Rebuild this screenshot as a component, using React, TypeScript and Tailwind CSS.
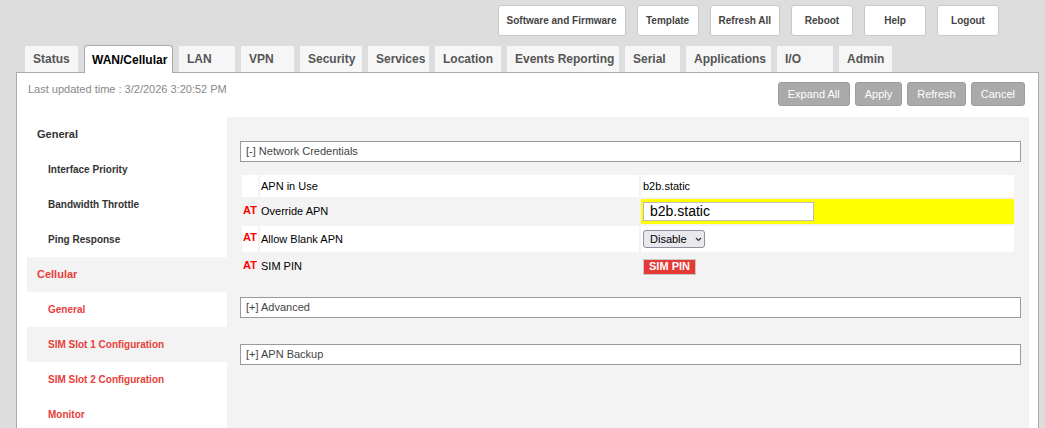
import React from 'react';

const topButtons = ['Software and Firmware', 'Template', 'Refresh All', 'Reboot', 'Help', 'Logout'];

const tabs: { label: string; w: string }[] = [
  { label: 'Status', w: 'w-[53px]' },
  { label: 'WAN/Cellular', w: 'w-[89px]' },
  { label: 'LAN', w: 'w-[56px]' },
  { label: 'VPN', w: 'w-[53px]' },
  { label: 'Security', w: 'w-[62px]' },
  { label: 'Services', w: 'w-[61px]' },
  { label: 'Location', w: 'w-[66px]' },
  { label: 'Events Reporting', w: 'w-[112px]' },
  { label: 'Serial', w: 'w-[55px]' },
  { label: 'Applications', w: 'w-[85px]' },
  { label: 'I/O', w: 'w-[56px]' },
  { label: 'Admin', w: 'w-[53px]' },
];

const navItems: { label: string; header?: boolean; red?: boolean; shaded?: boolean }[] = [
  { label: 'General', header: true },
  { label: 'Interface Priority' },
  { label: 'Bandwidth Throttle' },
  { label: 'Ping Response' },
  { label: 'Cellular', header: true, red: true, shaded: true },
  { label: 'General', red: true },
  { label: 'SIM Slot 1 Configuration', red: true, shaded: true },
  { label: 'SIM Slot 2 Configuration', red: true },
  { label: 'Monitor', red: true },
];

const Chevron: React.FC = () => (
  <svg width="7" height="5" viewBox="0 0 7 5" className="ml-[8px]">
    <path d="M1 1l2.5 2.5L6 1" fill="none" stroke="#333" strokeWidth="1.2" />
  </svg>
);

const SectionBox: React.FC<{ title: string; className?: string }> = ({ title, className }) => (
  <div className={`ml-[13px] mr-[8px] h-[21px] border border-[#9a9a9a] bg-white pl-[5px] flex items-center text-[11px] text-[#444] ${className ?? ''}`}>
    {title}
  </div>
);

const At: React.FC = () => <span className="text-[11px] font-bold text-[#ff0000] leading-none">AT</span>;

export default function App() {
  return (
    <div className="min-h-screen bg-[#dddddd] font-['Liberation_Sans',Arial,sans-serif] overflow-hidden">
      {/* top bar */}
      <div className="h-[45px] flex justify-end items-start gap-[11px] pt-[5px] pr-[46px]">
        {topButtons.map((b) => (
          <button
            key={b}
            className="h-[31px] min-w-[62px] px-[8px] bg-white border border-[#c8c8c8] rounded-[3px] text-[10px] font-bold text-[#444]"
          >
            {b}
          </button>
        ))}
      </div>

      {/* tabs */}
      <div className="relative z-10 h-[27px] flex items-end gap-[6px] pl-[25px]">
        {tabs.map((t) =>
          t.label === 'WAN/Cellular' ? (
            <div
              key={t.label}
              className={`${t.w} h-[28px] -mb-px pl-[7px] flex items-center bg-white border border-b-0 border-[#aaa] rounded-t-[4px] text-[12px] font-bold text-black`}
            >
              {t.label}
            </div>
          ) : (
            <div
              key={t.label}
              className={`${t.w} h-[26px] pl-[8px] flex items-center bg-[#f6f6f6] text-[12px] font-bold text-[#555]`}
            >
              {t.label}
            </div>
          )
        )}
      </div>

      {/* main panel */}
      <div className="ml-[16px] mr-[6px] bg-white border border-b-0 border-[#aaa]">
        <div className="h-[44px] flex justify-between items-start">
          <div className="mt-[10px] pl-[11px] text-[11px] leading-[13px] text-[#888]">
            Last updated time : 3/2/2026 3:20:52 PM
          </div>
          <div className="mt-[9px] mr-[13px] flex gap-[5px]">
            {['Expand All', 'Apply', 'Refresh', 'Cancel'].map((b) => (
              <button
                key={b}
                className="h-[24px] px-[9px] bg-[#aaaaaa] border border-[#9c9c9c] rounded-[3px] text-[11px] text-white"
              >
                {b}
              </button>
            ))}
          </div>
        </div>

        <div className="flex pl-[10px] pr-[9px]">
          {/* side nav */}
          <div className="w-[200px] shrink-0">
            {navItems.map((n, i) => (
              <div
                key={i}
                className={`h-[35px] flex items-center font-bold ${n.header ? 'pl-[10px] text-[11px]' : 'pl-[21px] text-[10px]'} ${
                  n.red ? 'text-[#e8403a]' : 'text-[#333]'
                } ${n.shaded ? 'bg-[#f3f3f3]' : ''}`}
              >
                {n.label}
              </div>
            ))}
          </div>

          {/* content */}
          <div className="flex-1 bg-[#f3f3f3] pt-[24px] pb-[40px]">
            <SectionBox title="[-] Network Credentials" />

            <div className="mt-[13px] ml-[15px] mr-[15px] flex flex-col gap-y-[2px] text-[11px] text-black">
              <div className="h-[22px] grid grid-cols-[16px_379px_1fr] gap-x-[2px]">
                <div className="bg-white" />
                <div className="bg-white flex items-center pl-[1px]">APN in Use</div>
                <div className="bg-white flex items-center pl-[2px]">b2b.static</div>
              </div>
              <div className="h-[25px] grid grid-cols-[16px_379px_1fr] gap-x-[2px]">
                <div className="flex items-center pl-[1px] pb-[3px]">
                  <At />
                </div>
                <div className="flex items-center pl-[1px]">Override APN</div>
                <div className="bg-[#ffff00] flex items-center pl-[2px]">
                  <input
                    defaultValue="b2b.static"
                    className="w-[171px] h-[19px] bg-white border border-[#bdbdbd] px-[6px] text-[14px] text-black outline-none font-['Liberation_Sans',Arial,sans-serif]"
                  />
                </div>
              </div>
              <div className="h-[26px] grid grid-cols-[16px_379px_1fr] gap-x-[2px]">
                <div className="bg-white flex items-center pl-[1px] pb-[3px]">
                  <At />
                </div>
                <div className="bg-white flex items-center pl-[1px]">Allow Blank APN</div>
                <div className="bg-white flex items-center pl-[2px]">
                  <div className="h-[18px] w-[62px] flex items-center pl-[6px] bg-[#e9e9ed] border border-[#8f8f9d] rounded-[3px] text-[11px]">
                    Disable
                    <Chevron />
                  </div>
                </div>
              </div>
              <div className="h-[25px] grid grid-cols-[16px_379px_1fr] gap-x-[2px]">
                <div className="flex items-center pl-[1px] pb-[3px]">
                  <At />
                </div>
                <div className="flex items-center pl-[1px]">SIM PIN</div>
                <div className="flex items-center pl-[2px]">
                  <button className="h-[16px] w-[53px] bg-[#e53935] border border-[#c9c9c9] text-[11px] font-bold text-white leading-none">
                    SIM PIN
                  </button>
                </div>
              </div>
            </div>

            <SectionBox title="[+] Advanced" className="mt-[18px]" />
            <SectionBox title="[+] APN Backup" className="mt-[26px]" />
          </div>
        </div>
      </div>
    </div>
  );
}
